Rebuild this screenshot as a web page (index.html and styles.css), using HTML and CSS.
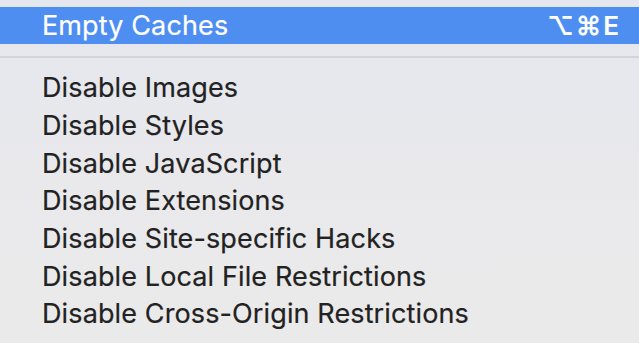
FILE: index.html
```html
<!doctype html>
<html lang="en">
  <head>
    <meta charset="UTF-8" />
    <title>Develop menu</title>
    <link rel="stylesheet" href="styles.css">
  </head>
  <body>
    <div class="menu">
      <div class="menu-item selected">
        <span class="label">Empty Caches</span>
        <span class="shortcut">⌥⌘E</span>
      </div>
      <div class="separator"></div>
      <div class="menu-item"><span class="label">Disable Images</span></div>
      <div class="menu-item"><span class="label">Disable Styles</span></div>
      <div class="menu-item"><span class="label">Disable JavaScript</span></div>
      <div class="menu-item"><span class="label">Disable Extensions</span></div>
      <div class="menu-item"><span class="label">Disable Site-specific Hacks</span></div>
      <div class="menu-item"><span class="label">Disable Local File Restrictions</span></div>
      <div class="menu-item"><span class="label">Disable Cross-Origin Restrictions</span></div>
    </div>
  </body>
</html>
```

FILE: styles.css
```css
html,
body {
  margin: 0;
  height: 100%;
}
body {
  font-family: Inter, "Liberation Sans", sans-serif;
  background: linear-gradient(180deg, #e5e7ee 0%, #e9e9ec 50%, #ebeaea 100%);
  color: #222;
  overflow: hidden;
}
.menu {
  padding-top: 7px;
}
.menu-item {
  display: flex;
  align-items: center;
  justify-content: space-between;
  height: 37.7px;
  padding: 0 18px 0 42px;
  font-size: 27px;
  line-height: 1;
  letter-spacing: 0.12px;
  -webkit-text-stroke: 0.2px currentColor;
}
.menu-item.selected {
  height: 37px;
  background: #4d8ef0;
  color: #fff;
}
.shortcut {
  font-size: 26px;
  font-weight: 600;
  letter-spacing: 2px;
}
.separator {
  height: 2px;
  background: #d3d4d9;
  margin: 12px 0 11px;
}
```
